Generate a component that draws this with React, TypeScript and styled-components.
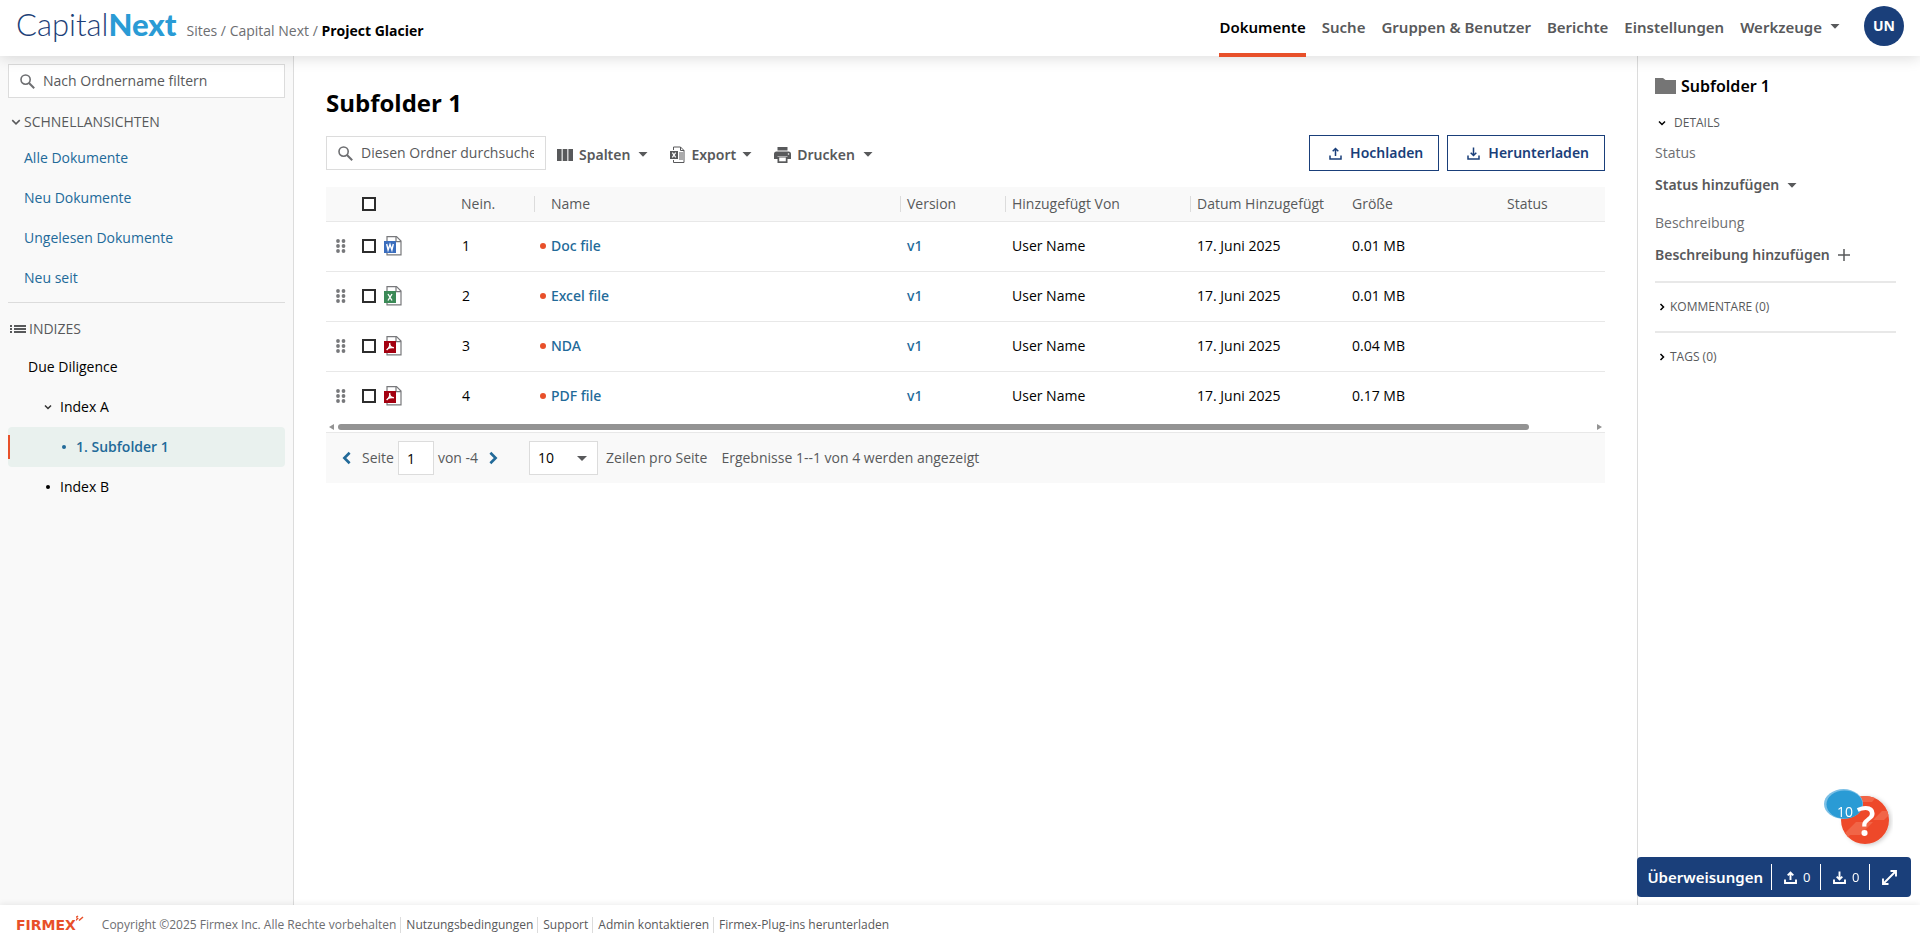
import React from "react";
import styled, { createGlobalStyle } from "styled-components";

const color = {
  text: "#000000",
  body: "#58595b",
  muted: "#6d6e71",
  link: "#226a99",
  navy: "#1a3f7a",
  orange: "#e8502a",
  line: "#dcdcdc",
  softLine: "#e8e8e8",
  panel: "#f9f9f9",
};

const strongFont = `"Noto Sans", "Open Sans", sans-serif`;

const GlobalStyle = createGlobalStyle`
  *, *::before, *::after { box-sizing: border-box; }
  body { margin: 0; background: #fff; }
  body, button, input, select {
    font-family: "Open Sans", "Noto Sans", sans-serif;
    font-size: 14px;
    line-height: 20px;
    color: ${color.text};
  }
  a { text-decoration: none; color: inherit; }
  button { border: 0; background: none; padding: 0; cursor: pointer; }
  h1, h2, ul { margin: 0; padding: 0; }
  ul { list-style: none; }
  svg { display: block; flex: none; }
`;

const Page = styled.div`
  min-height: 100vh;
  display: flex;
  flex-direction: column;
`;

/* Header */
const Header = styled.header`
  position: relative;
  z-index: 2;
  display: flex;
  justify-content: space-between;
  height: 56px;
  padding: 0 16px;
  background: #fff;
  box-shadow: 0 2px 14px rgba(0, 0, 0, 0.14);
`;
const Brand = styled.div`
  display: flex;
  align-items: baseline;
  gap: 10px;
  padding-top: 6px;
`;
const Logo = styled.a`
  font-family: Lato, sans-serif;
  font-size: 31px;
  line-height: 36px;
  font-weight: 300;
  color: #1d3f78;
`;
const LogoStrong = styled.span`
  font-weight: 900;
  color: #2a9bd5;
`;
const Breadcrumb = styled.nav`
  color: ${color.muted};
`;
const Current = styled.span`
  font-weight: 700;
  color: #000;
`;
const Nav = styled.nav`
  display: flex;
  gap: 16px;
`;
const NavLink = styled.a<{ $active?: boolean }>`
  display: flex;
  align-items: center;
  gap: 8px;
  height: 57px;
  padding-bottom: ${(p) => (p.$active ? "0" : "4px")};
  border-bottom: ${(p) => (p.$active ? `4px solid ${color.orange}` : "0")};
  font-family: ${strongFont};
  font-size: 15px;
  font-weight: 600;
  color: ${(p) => (p.$active ? "#000" : color.body)};
`;
const Avatar = styled.button`
  width: 40px;
  height: 40px;
  margin: 6px 0 0 8px;
  border-radius: 50%;
  background: ${color.navy};
  color: #fff;
  font-weight: 700;
`;

/* Body */
const Body = styled.div`
  flex: 1;
  display: flex;
`;
const Sidebar = styled.aside`
  width: 294px;
  padding: 8px 8px 0;
  background: ${color.panel};
  border-right: 1px solid ${color.line};
`;
const SearchBox = styled.label<{ $narrow?: boolean }>`
  display: flex;
  align-items: center;
  gap: 8px;
  width: ${(p) => (p.$narrow ? "220px" : "auto")};
  height: 34px;
  padding: 0 11px;
  border: 1px solid ${color.line};
  background: #fff;
`;
const SearchInput = styled.input`
  flex: 1;
  min-width: 0;
  padding: 0;
  border: 0;
  outline: 0;
  background: none;
  color: ${color.body};
  &::placeholder { color: ${color.body}; opacity: 1; }
`;
const SectionToggle = styled.button`
  display: flex;
  align-items: center;
  gap: 3px;
  height: 40px;
  margin-top: 4px;
  padding-left: 3px;
  color: ${color.body};
`;
const QuickList = styled.ul`
  padding-bottom: 4px;
  margin-bottom: 8px;
  margin-top: -4px;
  border-bottom: 1px solid ${color.line};
`;
const QuickLink = styled.a`
  display: block;
  padding: 10px 16px;
  color: ${color.link};
`;
const IndexTitle = styled.h2`
  display: flex;
  align-items: center;
  gap: 3px;
  height: 36px;
  padding-left: 2px;
  font-size: 14px;
  font-weight: 400;
  color: ${color.body};
`;
const TreeItem = styled.a<{ $level: number; $selected?: boolean }>`
  position: relative;
  display: flex;
  align-items: center;
  gap: 8px;
  height: 40px;
  padding-left: ${(p) => 20 + p.$level * 16}px;
  border-radius: 4px;
  font-weight: ${(p) => (p.$selected ? 600 : 400)};
  color: ${(p) => (p.$selected ? color.link : "#000")};
  background: ${(p) => (p.$selected ? "#e9f1ee" : "none")};
  &::before {
    content: "";
    display: ${(p) => (p.$selected ? "block" : "none")};
    position: absolute;
    left: 0;
    top: 8px;
    width: 2px;
    height: 24px;
    background: ${color.orange};
  }
`;
const Bullet = styled.span`
  width: 4px;
  height: 4px;
  margin: 0 2px;
  border-radius: 50%;
  background: currentColor;
`;

/* Main */
const Main = styled.main`
  flex: 1;
  min-width: 0;
  padding: 32px;
`;
const Title = styled.h1`
  font-size: 24px;
  line-height: 30px;
  font-weight: 700;
`;
const Toolbar = styled.div`
  display: flex;
  align-items: center;
  margin: 17px 0 16px;
`;
const ToolGroup = styled.div`
  display: flex;
  flex: 1;
  gap: 22px;
  padding: 3px 0 0 11px;
`;
const ToolButton = styled.button`
  display: flex;
  align-items: center;
  gap: 6px;
  font-family: ${strongFont};
  font-weight: 600;
  color: ${color.body};
`;
const ToolCaret = styled.span`
  padding-left: 2px;
`;
const Actions = styled.div`
  display: flex;
  gap: 8px;
`;
const ActionButton = styled.button`
  display: flex;
  align-items: center;
  gap: 8px;
  height: 36px;
  padding: 0 15px 0 19px;
  border: 1px solid ${color.navy};
  font-family: ${strongFont};
  font-weight: 600;
  color: ${color.navy};
`;
const Table = styled.table`
  width: 100%;
  table-layout: fixed;
  border-collapse: collapse;
`;
const Col = styled.col<{ $w?: number }>`
  width: ${(p) => (p.$w ? `${p.$w}px` : "auto")};
`;
const Th = styled.th<{ $pad?: number; $sep?: boolean }>`
  height: 34px;
  padding: 0 0 0 ${(p) => p.$pad ?? 7}px;
  text-align: left;
  font-weight: 400;
  white-space: nowrap;
  color: ${color.body};
  background: ${color.panel}
    ${(p) => (p.$sep ? `linear-gradient(${color.line}, ${color.line}) 0 50% / 1px 16px no-repeat` : "")};
  border-bottom: 1px solid ${color.softLine};
`;
const Td = styled.td<{ $pad?: number }>`
  height: 50px;
  padding: 0 0 0 ${(p) => p.$pad ?? 7}px;
  white-space: nowrap;
`;
const Tr = styled.tr`
  border-bottom: 1px solid ${color.softLine};
  &:last-child { border-bottom: 0; }
`;
const NameCell = styled.div`
  display: flex;
  align-items: center;
  gap: 5px;
`;
const NewDot = styled.span`
  width: 6px;
  height: 6px;
  border-radius: 50%;
  background: ${color.orange};
`;
const CellLink = styled.a`
  font-family: ${strongFont};
  font-weight: 500;
  color: ${color.link};
`;
const Check = styled.input`
  display: block;
  appearance: none;
  width: 14px;
  height: 14px;
  margin: 0;
  border: 2px solid #2d2d2d;
  background: #fff;
`;
const ScrollRow = styled.div`
  display: flex;
  align-items: center;
  justify-content: space-between;
  gap: 4px;
  height: 11px;
  padding: 0 3px;
`;
const ScrollTrack = styled.div`
  flex: 1;
  padding-right: 5%;
`;
const ScrollThumb = styled.div`
  height: 6px;
  border-radius: 3px;
  background: #939393;
`;
const Pager = styled.div`
  display: flex;
  align-items: center;
  height: 51px;
  padding-left: 14px;
  border-top: 1px solid ${color.softLine};
  background: ${color.panel};
  color: ${color.body};
`;
const PageField = styled.label`
  display: flex;
  align-items: center;
  gap: 4px;
  padding: 0 4px 0 8px;
`;
const PageInput = styled.input`
  width: 36px;
  height: 34px;
  padding: 0 8px;
  border: 1px solid ${color.line};
`;
const PageTotal = styled.span`
  padding-right: 8px;
`;
const SelectWrap = styled.label`
  display: flex;
  align-items: center;
  gap: 8px;
  padding: 0 14px 0 29px;
`;
const Select = styled.select`
  appearance: none;
  width: 69px;
  height: 34px;
  padding: 0 8px;
  border: 1px solid ${color.line};
  border-radius: 0;
  background: #fff
    url("data:image/svg+xml,%3Csvg xmlns='http://www.w3.org/2000/svg' width='10' height='5'%3E%3Cpath d='M0 0h10L5 5z' fill='%2358595b'/%3E%3C/svg%3E")
    right 10px center no-repeat;
`;

/* Details panel */
const Details = styled.aside`
  width: 283px;
  padding: 17px 24px 0 17px;
  border-left: 1px solid ${color.line};
`;
const DetailsTitle = styled.h2`
  display: flex;
  align-items: center;
  gap: 5px;
  height: 26px;
  font-family: ${strongFont};
  font-size: 16px;
  font-weight: 600;
`;
const DetailsBody = styled.div`
  padding-bottom: 2px;
`;
const PanelToggle = styled.button<{ $open?: boolean }>`
  display: flex;
  align-items: center;
  gap: ${(p) => (p.$open ? "8px" : "4px")};
  width: 100%;
  height: ${(p) => (p.$open ? "32px" : "50px")};
  padding-left: 3px;
  margin-top: ${(p) => (p.$open ? "8px" : "0")};
  border-top: ${(p) => (p.$open ? "0" : `2px solid ${color.softLine}`)};
  font-size: 12px;
  color: ${color.body};
`;
const FieldLabel = styled.div`
  height: 28px;
  line-height: 28px;
  color: ${color.muted};
`;
const FieldButton = styled.button`
  display: flex;
  align-items: center;
  gap: 8px;
  height: 36px;
  margin-bottom: 6px;
  font-family: ${strongFont};
  font-weight: 600;
  color: ${color.body};
`;

/* Floating widgets */
const Help = styled.button`
  position: fixed;
  right: 27px;
  bottom: 96px;
  z-index: 3;
`;
const Transfers = styled.div`
  position: fixed;
  right: 9px;
  bottom: 48px;
  z-index: 3;
  display: flex;
  align-items: center;
  height: 40px;
  padding-left: 10px;
  border-radius: 4px;
  background: ${color.navy};
  color: #fff;
`;
const TransfersTitle = styled.span`
  padding-right: 8px;
  font-family: ${strongFont};
  font-size: 15px;
  font-weight: 600;
`;
const TransferButton = styled.button<{ $last?: boolean }>`
  display: flex;
  align-items: center;
  gap: 6px;
  width: ${(p) => (p.$last ? "42px" : "49px")};
  height: 26px;
  padding-left: 12px;
  border-left: 1px solid #fff;
  font-size: 13px;
  color: #fff;
`;

/* Footer */
const Footer = styled.footer`
  position: relative;
  z-index: 2;
  display: flex;
  align-items: center;
  height: 40px;
  padding: 0 16px;
  background: #fff;
  box-shadow: 0 -1px 6px rgba(0, 0, 0, 0.08);
  font-size: 12px;
  color: ${color.body};
`;
const FirmexLogo = styled.a`
  display: flex;
  align-items: flex-start;
  margin-right: 18px;
  font-family: "DejaVu Sans", sans-serif;
  font-size: 14px;
  font-weight: 700;
  color: ${color.orange};
`;
const Copyright = styled.span`
  color: ${color.muted};
  padding-right: 4px;
`;
const FooterLink = styled.a`
  padding: 0 4px 0 5px;
  border-left: 1px solid ${color.line};
  line-height: 16px;
`;

const CaretDown = () => (
  <svg width="10" height="5" viewBox="0 0 10 5"><path d="M0.5 0h9L5 4.8z" fill={color.body} /></svg>
);
const Chevron = ({ dir, size = 8, stroke = "#333", width = 1.5 }: { dir: "down" | "left" | "right"; size?: number; stroke?: string; width?: number }) => {
  const d = { down: "M1 2.5 4 5.5 7 2.5", left: "M5.5 1 2.5 4 5.5 7", right: "M2.5 1 5.5 4 2.5 7" }[dir];
  return (
    <svg width={size} height={size} viewBox="0 0 8 8" fill="none" stroke={stroke} strokeWidth={width}><path d={d} /></svg>
  );
};
const SearchIcon = () => (
  <svg width="15" height="15" viewBox="0 0 15 15" fill="none" stroke="#6d6e71" strokeWidth="1.6">
    <circle cx="5.6" cy="5.6" r="4.6" /><path d="M9 9l5.2 5.2" strokeWidth="2" />
  </svg>
);
const ListIcon = () => (
  <svg width="16" height="8" viewBox="0 0 16 8" fill={color.body}>
    <path d="M0 0h2v2H0zM0 3h2v2H0zM0 6h2v2H0zM4 0h12v2H4zM4 3h12v2H4zM4 6h12v2H4z" />
  </svg>
);
const ColumnsIcon = () => (
  <svg width="16" height="12" viewBox="0 0 16 12" fill={color.body}>
    <path d="M0 0h4.6v12H0zM5.7 0h4.6v12H5.7zM11.4 0H16v12h-4.6z" />
  </svg>
);
const ExportIcon = () => (
  <svg width="15" height="18" viewBox="0 0 15 18">
    <path d="M3.5 4V1h7L14 4.5V16.5H3.5V14M10.5 1v3.5H14" fill="none" stroke={color.body} />
    <path d="M9 7h4M9 9h4M9 11h4M9 13h4" stroke={color.body} />
    <path d="M0 5h8v8H0z" fill={color.body} />
    <path d="M2.3 6.7l3.4 4.6M5.7 6.7l-3.4 4.6" stroke="#fff" strokeWidth="1.2" />
  </svg>
);
const PrintIcon = () => (
  <svg width="17" height="16" viewBox="0 0 17 16">
    <path d="M3.5 0h10v3.5h-10zM2.5 4.5h12A2.5 2.5 0 0 1 17 7v5h-3.5V9.5h-10V12H0V7a2.5 2.5 0 0 1 2.5-2.5zM3.5 10h10v6h-10z" fill={color.body} />
    <path d="M5.2 10.5h6.6v3.8H5.2z" fill="#fff" />
    <circle cx="14.5" cy="7" r=".8" fill="#fff" />
  </svg>
);
const TransferIcon = ({ down, stroke, bold }: { down?: boolean; stroke: string; bold?: boolean }) => (
  <svg width="13" height="13" viewBox="0 0 13 13" fill="none" stroke={stroke} strokeWidth={bold ? 1.9 : 1.5}>
    <path d="M1 8.5v3.5h11V8.5" />
    <path d={down ? "M6.5 .5v8M3.7 5.7l2.8 2.8 2.8-2.8" : "M6.5 9V1.500M3.7 4.3l2.8-2.8 2.8 2.8"} />
  </svg>
);
const DragIcon = () => (
  <svg width="10" height="14" viewBox="0 0 10 14" fill="#77787b">
    {[2, 7, 12].map((y) => (
      <g key={y}><circle cx="2" cy={y} r="1.9" /><circle cx="7.5" cy={y} r="1.9" /></g>
    ))}
  </svg>
);
type Kind = "word" | "excel" | "pdf";
const FileIcon = ({ kind }: { kind: Kind }) => {
  const fill = { word: "#3a6dbd", excel: "#3b8a57", pdf: "#a30010" }[kind];
  const mark = {
    word: "M2.7 8l1.4 6L6 8.500l1.9 5.500L9.300 8",
    excel: "M4 8l4 6.500M8 8l-4 6.500",
    pdf: "M5.600 7c.6 2-.1 4.600-3 7M5.600 7.200c0 2.600 1.600 4.200 4.300 4.600M3.500 12.700c1.900-1 3.800-1.400 6.300-1.100",
  }[kind];
  return (
    <svg width="18" height="21" viewBox="0 0 18 21">
      <path d="M3 .6h9.500L17 5.100V18.900H3z" fill="#fff" stroke="#77787b" strokeWidth="1.2" />
      <path d="M12 1v4.600h5" fill="none" stroke="#77787b" strokeWidth="1.2" />
      <path d="M0 5h12v12H0z" fill={fill} />
      <path d={mark} fill="none" stroke="#fff" strokeWidth="1.4" />
    </svg>
  );
};
const FolderIcon = () => (
  <svg width="21" height="16" viewBox="0 0 21 16" fill="#757575"><path d="M0 0h8l2.5 2H21v14H0z" /></svg>
);
const PlusIcon = () => (
  <svg width="12" height="12" viewBox="0 0 12 12" stroke={color.body} strokeWidth="1.5"><path d="M6 0v12M0 6h12" /></svg>
);
const ExpandIcon = () => (
  <svg width="15" height="15" viewBox="0 0 15 15" fill="none" stroke="#fff" strokeWidth="1.9">
    <path d="M8.5 1H14v5.5M14 1 1 14M1 8.5V14h5.5" />
  </svg>
);
const HelpIcon = () => (
  <svg width="70" height="60" viewBox="0 0 70 60">
    <defs>
      <clipPath id="disc"><circle cx="42" cy="31" r="24" /></clipPath>
      <filter id="lift" x="-20%" y="-20%" width="150%" height="150%">
        <feDropShadow dx="2" dy="1" stdDeviation="2" floodOpacity=".2" />
      </filter>
    </defs>
    <circle cx="42" cy="31" r="24" fill="#ee4a2b" filter="url(#lift)" />
    <g clipPath="url(#disc)" fill="#f16547">
      <path d="M18 48 33 33h17L37 46H27l-5 5zM50 31l9-9h11l-9 9zM32 11l4-4h18l-5 6H34z" />
    </g>
    <ellipse cx="20.5" cy="15" rx="19.5" ry="15" fill="#7cc0e6" />
    <ellipse cx="21.5" cy="15.5" rx="18" ry="14" fill="#2a9bd5" />
    <text x="22" y="28" textAnchor="middle" fontSize="14" fill="#fff">10</text>
    <text x="43" y="47" textAnchor="middle" fontSize="42" fontWeight="600" fill="#fff">?</text>
  </svg>
);
const SparkIcon = () => (
  <svg width="8" height="15" viewBox="0 0 8 15" fill="none" stroke={color.orange} strokeWidth="1.5">
    <path d="M-1 6l3.200-3M3 5.500l4-3.500M0 2.500 2 1" />
  </svg>
);

const quickLinks = ["Alle Dokumente", "Neu Dokumente", "Ungelesen Dokumente", "Neu seit"];
const files: { no: number; name: string; kind: Kind; size: string }[] = [
  { no: 1, name: "Doc file", kind: "word", size: "0.01 MB" },
  { no: 2, name: "Excel file", kind: "excel", size: "0.01 MB" },
  { no: 3, name: "NDA", kind: "pdf", size: "0.04 MB" },
  { no: 4, name: "PDF file", kind: "pdf", size: "0.17 MB" },
];

export default function App() {
  return (
    <Page>
      <GlobalStyle />
      <Header>
        <Brand>
          <Logo href="#">Capital<LogoStrong>Next</LogoStrong></Logo>
          <Breadcrumb>
            <a href="#">Sites</a> / <a href="#">Capital Next</a> / <Current>Project Glacier</Current>
          </Breadcrumb>
        </Brand>
        <Nav>
          <NavLink href="#" $active>Dokumente</NavLink>
          <NavLink href="#">Suche</NavLink>
          <NavLink href="#">Gruppen &amp; Benutzer</NavLink>
          <NavLink href="#">Berichte</NavLink>
          <NavLink href="#">Einstellungen</NavLink>
          <NavLink href="#">Werkzeuge <CaretDown /></NavLink>
          <Avatar>UN</Avatar>
        </Nav>
      </Header>

      <Body>
        <Sidebar>
          <SearchBox>
            <SearchIcon />
            <SearchInput placeholder="Nach Ordnername filtern" />
          </SearchBox>
          <SectionToggle><Chevron dir="down" size={10} stroke={color.body} width={1.2} />SCHNELLANSICHTEN</SectionToggle>
          <QuickList>
            {quickLinks.map((label) => (
              <li key={label}><QuickLink href="#">{label}</QuickLink></li>
            ))}
          </QuickList>
          <IndexTitle><ListIcon />INDIZES</IndexTitle>
          <TreeItem href="#" $level={0}>Due Diligence</TreeItem>
          <TreeItem href="#" $level={1}><Chevron dir="down" size={8} />Index A</TreeItem>
          <TreeItem href="#" $level={2} $selected><Bullet />1. Subfolder 1</TreeItem>
          <TreeItem href="#" $level={1}><Bullet />Index B</TreeItem>
        </Sidebar>

        <Main>
          <Title>Subfolder 1</Title>
          <Toolbar>
            <SearchBox $narrow>
              <SearchIcon />
              <SearchInput placeholder="Diesen Ordner durchsuchen" />
            </SearchBox>
            <ToolGroup>
              <ToolButton><ColumnsIcon />Spalten<ToolCaret><CaretDown /></ToolCaret></ToolButton>
              <ToolButton><ExportIcon />Export<CaretDown /></ToolButton>
              <ToolButton><PrintIcon />Drucken<ToolCaret><CaretDown /></ToolCaret></ToolButton>
            </ToolGroup>
            <Actions>
              <ActionButton><TransferIcon stroke={color.navy} />Hochladen</ActionButton>
              <ActionButton><TransferIcon down stroke={color.navy} />Herunterladen</ActionButton>
            </Actions>
          </Toolbar>
          <Table>
            <colgroup>
              <Col $w={36} /><Col $w={22} /><Col $w={70} /><Col $w={80} /><Col />
              <Col $w={105} /><Col $w={185} /><Col $w={155} /><Col $w={155} /><Col $w={105} />
            </colgroup>
            <thead>
              <tr>
                <Th />
                <Th $pad={0}><Check type="checkbox" aria-label="Alle auswählen" /></Th>
                <Th />
                <Th>Nein.</Th>
                <Th $sep $pad={17}>Name</Th>
                <Th $sep>Version</Th>
                <Th $sep>Hinzugefügt Von</Th>
                <Th $sep>Datum Hinzugefügt</Th>
                <Th>Größe</Th>
                <Th>Status</Th>
              </tr>
            </thead>
            <tbody>
              {files.map((f) => (
                <Tr key={f.no}>
                  <Td $pad={10}><DragIcon /></Td>
                  <Td $pad={0}><Check type="checkbox" aria-label={f.name} /></Td>
                  <Td $pad={0}><FileIcon kind={f.kind} /></Td>
                  <Td $pad={8}>{f.no}</Td>
                  <Td $pad={6}><NameCell><NewDot /><CellLink href="#">{f.name}</CellLink></NameCell></Td>
                  <Td><CellLink href="#">v1</CellLink></Td>
                  <Td>User Name</Td>
                  <Td>17. Juni 2025</Td>
                  <Td>{f.size}</Td>
                  <Td />
                </Tr>
              ))}
            </tbody>
          </Table>
          <ScrollRow>
            <svg width="5" height="6" viewBox="0 0 5 6"><path d="M5 0v6L0 3z" fill="#939393" /></svg>
            <ScrollTrack><ScrollThumb /></ScrollTrack>
            <svg width="5" height="6" viewBox="0 0 5 6"><path d="M0 0v6l5-3z" fill="#939393" /></svg>
          </ScrollRow>
          <Pager>
            <button aria-label="Zurück"><Chevron dir="left" size={14} stroke={color.link} /></button>
            <PageField>Seite<PageInput defaultValue="1" /></PageField>
            <PageTotal>von -4</PageTotal>
            <button aria-label="Weiter"><Chevron dir="right" size={14} stroke={color.link} /></button>
            <SelectWrap><Select defaultValue="10"><option>10</option></Select>Zeilen pro Seite</SelectWrap>
            <span>Ergebnisse 1--1 von 4 werden angezeigt</span>
          </Pager>
        </Main>

        <Details>
          <DetailsTitle><FolderIcon />Subfolder 1</DetailsTitle>
          <DetailsBody>
            <PanelToggle $open><Chevron dir="down" stroke="#000" />DETAILS</PanelToggle>
            <FieldLabel>Status</FieldLabel>
            <FieldButton>Status hinzufügen<CaretDown /></FieldButton>
            <FieldLabel>Beschreibung</FieldLabel>
            <FieldButton>Beschreibung hinzufügen<PlusIcon /></FieldButton>
          </DetailsBody>
          <PanelToggle><Chevron dir="right" stroke="#000" />KOMMENTARE (0)</PanelToggle>
          <PanelToggle><Chevron dir="right" stroke="#000" />TAGS (0)</PanelToggle>
        </Details>
      </Body>

      <Footer>
        <FirmexLogo href="#">FIRMEX<SparkIcon /></FirmexLogo>
        <Copyright>Copyright ©2025 Firmex Inc. Alle Rechte vorbehalten</Copyright>
        <FooterLink href="#">Nutzungsbedingungen</FooterLink>
        <FooterLink href="#">Support</FooterLink>
        <FooterLink href="#">Admin kontaktieren</FooterLink>
        <FooterLink href="#">Firmex-Plug-ins herunterladen</FooterLink>
      </Footer>

      <Help aria-label="Hilfe"><HelpIcon /></Help>
      <Transfers>
        <TransfersTitle>Überweisungen</TransfersTitle>
        <TransferButton><TransferIcon stroke="#fff" bold />0</TransferButton>
        <TransferButton><TransferIcon down stroke="#fff" bold />0</TransferButton>
        <TransferButton $last aria-label="Erweitern"><ExpandIcon /></TransferButton>
      </Transfers>
    </Page>
  );
}
